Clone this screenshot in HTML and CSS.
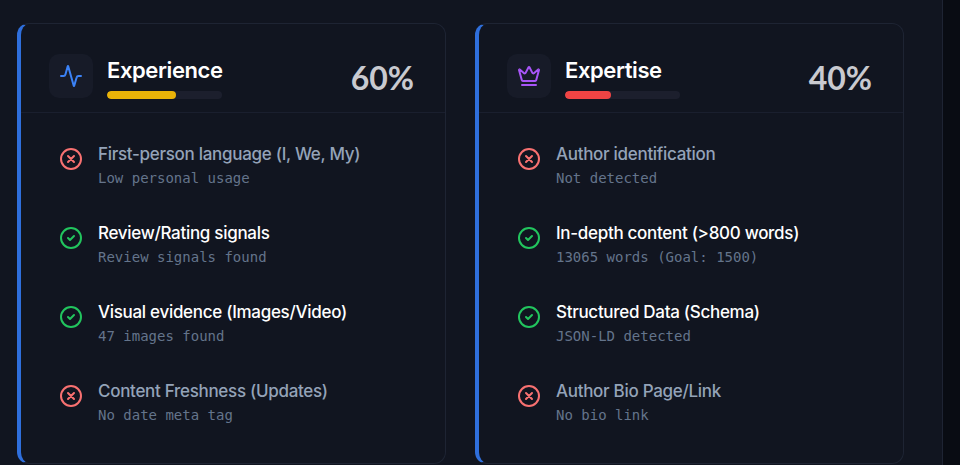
FILE: index.html
```html
<!DOCTYPE html>
<html lang="en">
<head>
    <meta charset="UTF-8">
    <meta name="viewport" content="width=device-width, initial-scale=1.0">
    <title>Experience and Expertise</title>
    <link rel="stylesheet" href="styles.css">
</head>
<body>
    <div class="main">
        <div class="cards">
            <div class="card">
                <div class="card-header">
                    <div class="icon-box">
                        <svg class="blue" width="24" height="24" viewBox="0 0 24 24" fill="none" stroke="currentColor" stroke-width="2" stroke-linecap="round" stroke-linejoin="round"><path d="M22 12h-2.5a2 2 0 0 0-1.9 1.5l-2.4 8.3a.25.25 0 0 1-.48 0L9.2 2.2a.25.25 0 0 0-.48 0l-2.3 8.3A2 2 0 0 1 4.5 12H2"/></svg>
                    </div>
                    <div class="heading">
                        <h2>Experience</h2>
                        <div class="bar"><div class="bar-fill yellow" style="width: 60%"></div></div>
                    </div>
                    <div class="percent">60%</div>
                </div>
                <div class="checks">
                    <div class="check">
                        <svg class="mark bad" width="24" height="24" viewBox="0 0 24 24" fill="none" stroke="currentColor" stroke-width="2" stroke-linecap="round" stroke-linejoin="round"><circle cx="12" cy="12" r="10"/><path d="m15 9-6 6M9 9l6 6"/></svg>
                        <div>
                            <div class="check-title">First-person language (I, We, My)</div>
                            <div class="check-note">Low personal usage</div>
                        </div>
                    </div>
                    <div class="check pass">
                        <svg class="mark good" width="24" height="24" viewBox="0 0 24 24" fill="none" stroke="currentColor" stroke-width="2" stroke-linecap="round" stroke-linejoin="round"><circle cx="12" cy="12" r="10"/><path d="m9 12 2 2 4-4"/></svg>
                        <div>
                            <div class="check-title">Review/Rating signals</div>
                            <div class="check-note">Review signals found</div>
                        </div>
                    </div>
                    <div class="check pass">
                        <svg class="mark good" width="24" height="24" viewBox="0 0 24 24" fill="none" stroke="currentColor" stroke-width="2" stroke-linecap="round" stroke-linejoin="round"><circle cx="12" cy="12" r="10"/><path d="m9 12 2 2 4-4"/></svg>
                        <div>
                            <div class="check-title">Visual evidence (Images/Video)</div>
                            <div class="check-note">47 images found</div>
                        </div>
                    </div>
                    <div class="check">
                        <svg class="mark bad" width="24" height="24" viewBox="0 0 24 24" fill="none" stroke="currentColor" stroke-width="2" stroke-linecap="round" stroke-linejoin="round"><circle cx="12" cy="12" r="10"/><path d="m15 9-6 6M9 9l6 6"/></svg>
                        <div>
                            <div class="check-title">Content Freshness (Updates)</div>
                            <div class="check-note">No date meta tag</div>
                        </div>
                    </div>
                </div>
            </div>
            <div class="card">
                <div class="card-header">
                    <div class="icon-box">
                        <svg class="purple" width="24" height="24" viewBox="0 0 24 24" fill="none" stroke="currentColor" stroke-width="2" stroke-linecap="round" stroke-linejoin="round"><path d="M11.56 3.27a.5.5 0 0 1 .88 0l2.95 5.6a1 1 0 0 0 1.52.3l4.28-3.66a.5.5 0 0 1 .8.5l-2.83 10.25a1 1 0 0 1-.96.74H5.8a1 1 0 0 1-.96-.74L2.01 6.01a.5.5 0 0 1 .8-.5l4.28 3.66a1 1 0 0 0 1.52-.3z"/><path d="M5 21h14"/></svg>
                    </div>
                    <div class="heading">
                        <h2>Expertise</h2>
                        <div class="bar"><div class="bar-fill red" style="width: 40%"></div></div>
                    </div>
                    <div class="percent">40%</div>
                </div>
                <div class="checks">
                    <div class="check">
                        <svg class="mark bad" width="24" height="24" viewBox="0 0 24 24" fill="none" stroke="currentColor" stroke-width="2" stroke-linecap="round" stroke-linejoin="round"><circle cx="12" cy="12" r="10"/><path d="m15 9-6 6M9 9l6 6"/></svg>
                        <div>
                            <div class="check-title">Author identification</div>
                            <div class="check-note">Not detected</div>
                        </div>
                    </div>
                    <div class="check pass">
                        <svg class="mark good" width="24" height="24" viewBox="0 0 24 24" fill="none" stroke="currentColor" stroke-width="2" stroke-linecap="round" stroke-linejoin="round"><circle cx="12" cy="12" r="10"/><path d="m9 12 2 2 4-4"/></svg>
                        <div>
                            <div class="check-title">In-depth content (&gt;800 words)</div>
                            <div class="check-note">13065 words (Goal: 1500)</div>
                        </div>
                    </div>
                    <div class="check pass">
                        <svg class="mark good" width="24" height="24" viewBox="0 0 24 24" fill="none" stroke="currentColor" stroke-width="2" stroke-linecap="round" stroke-linejoin="round"><circle cx="12" cy="12" r="10"/><path d="m9 12 2 2 4-4"/></svg>
                        <div>
                            <div class="check-title">Structured Data (Schema)</div>
                            <div class="check-note">JSON-LD detected</div>
                        </div>
                    </div>
                    <div class="check">
                        <svg class="mark bad" width="24" height="24" viewBox="0 0 24 24" fill="none" stroke="currentColor" stroke-width="2" stroke-linecap="round" stroke-linejoin="round"><circle cx="12" cy="12" r="10"/><path d="m15 9-6 6M9 9l6 6"/></svg>
                        <div>
                            <div class="check-title">Author Bio Page/Link</div>
                            <div class="check-note">No bio link</div>
                        </div>
                    </div>
                </div>
            </div>
        </div>
    </div>
    <div class="side"></div>
</body>
</html>
```

FILE: styles.css
```css
html, body {
    height: 100%;
}

body {
    font-family: Inter, "Noto Sans", sans-serif;
    margin: 0;
    padding: 0;
    background-color: #090c13;
    display: flex;
    overflow: hidden;
}

.main {
    width: 943px;
    height: 465px;
    box-sizing: border-box;
    padding: 23px 39px 0 17px;
    background-color: #111520;
    border-right: 1px solid #1e2433;
    flex-shrink: 0;
}

.side {
    flex: 1;
}

.cards {
    display: grid;
    grid-template-columns: 429px 429px;
    gap: 29px;
}

.card {
    height: 441px;
    box-sizing: border-box;
    background-color: #111520;
    border: 1px solid #1e2433;
    border-left: 4px solid #2f6fdc;
    border-radius: 12px;
}

.card-header {
    height: 89px;
    box-sizing: border-box;
    padding: 30px 31px 0 28px;
    display: flex;
    align-items: flex-start;
    border-bottom: 1px solid #1a1f2e;
}

.icon-box {
    width: 44px;
    height: 44px;
    border-radius: 10px;
    background-color: #171b28;
    display: flex;
    justify-content: center;
    align-items: center;
    flex-shrink: 0;
}

.blue {
    color: #3b82f6;
}

.purple {
    color: #a855f7;
}

.heading {
    margin-left: 14px;
    width: 115px;
}

.heading h2 {
    margin: 0;
    font-size: 22px;
    line-height: 32px;
    font-weight: 600;
    letter-spacing: -0.4px;
    color: #ffffff;
    white-space: nowrap;
}

.bar {
    height: 8px;
    margin-top: 5px;
    border-radius: 4px;
    background-color: #1c1f2d;
    overflow: hidden;
}

.bar-fill {
    height: 100%;
    border-radius: 4px;
}

.yellow {
    background-color: #eab308;
}

.red {
    background-color: #ef4444;
}

.percent {
    margin-left: auto;
    margin-top: 4px;
    font-family: Lato, sans-serif;
    font-size: 32px;
    line-height: 40px;
    font-weight: 700;
    color: #c9cad0;
}

.checks {
    padding: 27px 28px 0 38px;
    display: flex;
    flex-direction: column;
    gap: 31px;
}

.check {
    display: flex;
    align-items: flex-start;
    gap: 15px;
    height: 48px;
}

.mark {
    flex-shrink: 0;
    margin-top: 7px;
}

.bad {
    color: #f87171;
}

.good {
    color: #22c55e;
}

.check-title {
    font-size: 17px;
    line-height: 28px;
    font-weight: 500;
    letter-spacing: -0.3px;
    color: #94a3b8;
    white-space: nowrap;
}

.pass .check-title {
    color: #ffffff;
}

.check-note {
    font-family: "DejaVu Sans Mono", monospace;
    font-size: 14px;
    line-height: 20px;
    color: #64748b;
    white-space: nowrap;
}
```
